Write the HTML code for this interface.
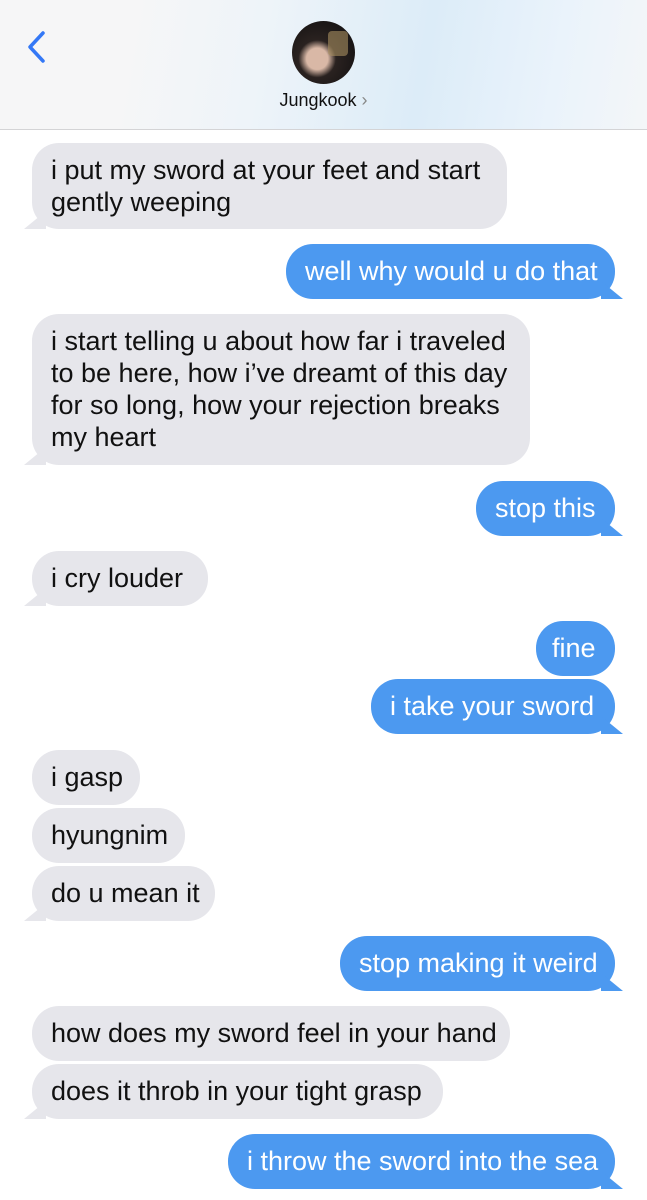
<!DOCTYPE html><html><head><style>
body{margin:0;width:647px;height:1200px;background:#fff;position:relative;overflow:hidden;font-family:"Liberation Sans",sans-serif}
.hdr{position:absolute;left:0;top:0;width:647px;height:129px;background:linear-gradient(100deg,#f6f6f7 20%,#eef4f9 40%,#dcecf8 65%,#eaf3fb 85%,#f4f6f8);border-bottom:1px solid #d4d4d6}
.b{position:absolute;font-size:27px;line-height:32px;padding:11px 0 12px 19px;border-radius:27px;box-sizing:border-box;white-space:nowrap}
.g{background:#e6e6eb;color:#111;left:32px}
.u{background:#4c99f0;color:#fff;right:32px}
.tl:after{content:"";position:absolute;left:-8px;bottom:0;width:22px;height:18px;background:#e6e6eb;clip-path:polygon(0 100%,100% 0,100% 100%)}
.tr:after{content:"";position:absolute;right:-8px;bottom:0;width:22px;height:18px;background:#4c99f0;clip-path:polygon(100% 100%,0 0,0 100%)}
</style></head><body>
<div class="hdr">
<svg style="position:absolute;left:25px;top:30px" width="22" height="34" viewBox="0 0 22 34"><path d="M18 3L5 17l13 14" fill="none" stroke="#3478f6" stroke-width="3.5" stroke-linecap="round" stroke-linejoin="round"/></svg>
<div style="position:absolute;left:292px;top:21px;width:63px;height:63px;border-radius:50%;background:radial-gradient(circle at 40% 60%,#d9b8a6 0 20%,#2a2220 35%,#1a1616 70%);overflow:hidden"><div style="position:absolute;left:36px;top:10px;width:20px;height:25px;background:#a89060;opacity:.6;border-radius:4px"></div></div>
<div style="position:absolute;left:0;width:647px;top:90px;text-align:center;font-size:18px;color:#111">Jungkook <span style="color:#888">›</span></div>
</div>
<div class="b g tl" style="top:143px;width:475px;height:86px">i put my sword at your feet and start<br>gently weeping</div>
<div class="b u tr" style="top:244px;width:329px;height:55px">well why would u do that</div>
<div class="b g tl" style="top:314px;width:498px;height:151px">i start telling u about how far i traveled<br>to be here, how i’ve dreamt of this day<br>for so long, how your rejection breaks<br>my heart</div>
<div class="b u tr" style="top:481px;width:139px;height:55px">stop this</div>
<div class="b g tl" style="top:551px;width:176px;height:55px">i cry louder</div>
<div class="b u" style="top:621px;width:79px;height:55px;padding-left:16px">fine</div>
<div class="b u tr" style="top:679px;width:244px;height:55px">i take your sword</div>
<div class="b g" style="top:750px;width:108px;height:55px">i gasp</div>
<div class="b g" style="top:808px;width:153px;height:55px">hyungnim</div>
<div class="b g tl" style="top:866px;width:183px;height:55px">do u mean it</div>
<div class="b u tr" style="top:936px;width:275px;height:55px">stop making it weird</div>
<div class="b g" style="top:1006px;width:478px;height:55px">how does my sword feel in your hand</div>
<div class="b g tl" style="top:1064px;width:411px;height:55px">does it throb in your tight grasp</div>
<div class="b u tr" style="top:1134px;width:387px;height:55px">i throw the sword into the sea</div>
</body></html>
